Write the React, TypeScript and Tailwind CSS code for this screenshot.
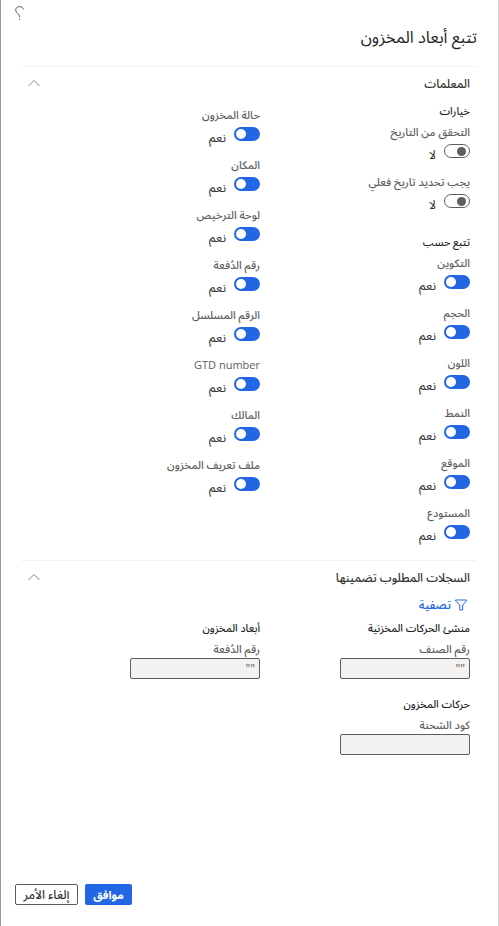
import { ReactNode } from 'react';

function Toggle({ on }: { on: boolean }) {
  return on ? (
    <span className="flex h-[14px] w-[26px] items-center justify-end rounded-full bg-[#2266e3] pl-[2px]">
      <span className="size-[10px] rounded-full bg-white" />
    </span>
  ) : (
    <span className="flex h-[14px] w-[26px] items-center justify-start rounded-full border border-[#605e5c] bg-white pr-[3px]">
      <span className="size-[9px] rounded-full bg-[#605e5c]" />
    </span>
  );
}

function Field({ label, on = true }: { label: string; on?: boolean }) {
  return (
    <div className="h-[50px]">
      <div className="h-5 whitespace-nowrap text-[11px] leading-5 font-medium text-[#605e5c]">{label}</div>
      <div className="mt-[2px] flex h-[14px] items-start gap-2">
        <Toggle on={on} />
        <span className="mt-px text-[12.5px] leading-5 text-[#323130]">{on ? 'نعم' : 'لا'}</span>
      </div>
    </div>
  );
}

function GroupTitle({ children }: { children: ReactNode }) {
  return <h3 className="h-5 whitespace-nowrap text-[10.6px] leading-5 font-medium text-[#201f1e]">{children}</h3>;
}

function InputField({ label, value }: { label: string; value: string }) {
  return (
    <div>
      <div className="h-5 text-[11px] leading-5 font-medium text-[#605e5c]">{label}</div>
      <div className="mt-[-1px] h-[21px] w-[130px] rounded-[2px] border border-[#605e5c] bg-[#f3f2f1] px-1 text-[12px] leading-[19px] text-[#605e5c]">
        {value}
      </div>
    </div>
  );
}

function SectionHeader({ children }: { children: ReactNode }) {
  return (
    <div className="mr-[22px] ml-5 flex h-[35px] items-center justify-between border-t border-[#f3f2f1] pr-[6px] pb-[2px] pl-[7px]">
      <h2 className="text-[11.9px] leading-5 font-medium text-[#323130]">{children}</h2>
      <svg width="12" height="8" viewBox="0 0 12 8" fill="none" stroke="#797775" strokeWidth="0.9">
        <path d="M.5 7 6 1.5 11.5 7" />
      </svg>
    </div>
  );
}

export default function App() {
  return (
    <div
      dir="rtl"
      className="relative flex h-[926px] w-[499px] flex-col overflow-hidden border-r border-l border-r-[#d0d0d0] border-l-[#999999] bg-white font-['Open_Sans','Noto_Sans_Arabic','DejaVu_Sans',sans-serif]"
    >
      <span className="absolute top-0 right-[-1px] h-8 w-px bg-[#7c8497]" />
      <header className="h-[66px]">
        <div className="flex h-[25px] justify-end pt-[6px] pl-[14px]">
          <svg width="9" height="15" viewBox="0 0 9 15" fill="none" stroke="#605e5c" strokeWidth="1">
            <path d="M.7 4.2C.7 2 2.3.6 4.5.6S8.3 2 8.3 3.7M.7 4.2c0 3 4 3.6 4 7M4.7 12.9v1.3" />
          </svg>
        </div>
        <h1 className="pr-[21px] text-[16.4px] leading-6 text-[#201f1e]">تتبع أبعاد المخزون</h1>
      </header>

      <SectionHeader>المعلمات</SectionHeader>
      <div className="flex h-[459px] pr-7">
        <div className="w-[210px]">
          <GroupTitle>خيارات</GroupTitle>
          <div className="mt-px">
            <Field label="التحقق من التاريخ" on={false} />
            <Field label="يجب تحديد تاريخ فعلي" on={false} />
          </div>
          <div className="mt-[10px]">
            <GroupTitle>تتبع حسب</GroupTitle>
          </div>
          <div className="mt-px">
            <Field label="التكوين" />
            <Field label="الحجم" />
            <Field label="اللون" />
            <Field label="النمط" />
            <Field label="الموقع" />
            <Field label="المستودع" />
          </div>
        </div>
        <div className="w-[210px] pt-1">
          <Field label="حالة المخزون" />
          <Field label="المكان" />
          <Field label="لوحة الترخيص" />
          <Field label="رقم الدُفعة" />
          <Field label="الرقم المسلسل" />
          <Field label="GTD number" />
          <Field label="المالك" />
          <Field label="ملف تعريف المخزون" />
        </div>
      </div>

      <SectionHeader>السجلات المطلوب تضمينها</SectionHeader>
      <div className="flex h-[23px] items-center gap-1 pr-[31px] pb-[3px]">
        <svg className="mt-[-1px]" width="12" height="12" viewBox="0 0 12 12" fill="none" stroke="#2266e3" strokeWidth="1">
          <path d="M.5 1h11v.8L7.7 6v5H4.8V6L.5 1.8Z" />
        </svg>
        <span className="text-[12px] leading-5 font-medium text-[#2266e3]">تصفية</span>
      </div>
      <div className="flex h-[137px] pr-7">
        <div className="w-[210px]">
          <GroupTitle>منشئ الحركات المخزنية</GroupTitle>
          <div className="mt-px">
            <InputField label="رقم الصنف" value={'""'} />
          </div>
          <div className="mt-[15px]">
            <GroupTitle>حركات المخزون</GroupTitle>
            <div className="mt-px">
              <InputField label="كود الشحنة" value="" />
            </div>
          </div>
        </div>
        <div className="w-[210px]">
          <GroupTitle>أبعاد المخزون</GroupTitle>
          <div className="mt-px">
            <InputField label="رقم الدُفعة" value={'""'} />
          </div>
        </div>
      </div>

      <footer className="mt-auto mb-[21px] flex justify-end gap-[7px] pl-[14px]">
        <button className="h-[21px] w-[47px] rounded-[2px] bg-[#2266e3] text-[11.2px] leading-[21px] font-bold text-white">موافق</button>
        <button className="h-[21px] w-[63px] rounded-[2px] border border-[#605e5c] bg-white text-[12px] leading-[19px] font-medium whitespace-nowrap text-[#323130]">
          إلغاء الأمر
        </button>
      </footer>
    </div>
  );
}
